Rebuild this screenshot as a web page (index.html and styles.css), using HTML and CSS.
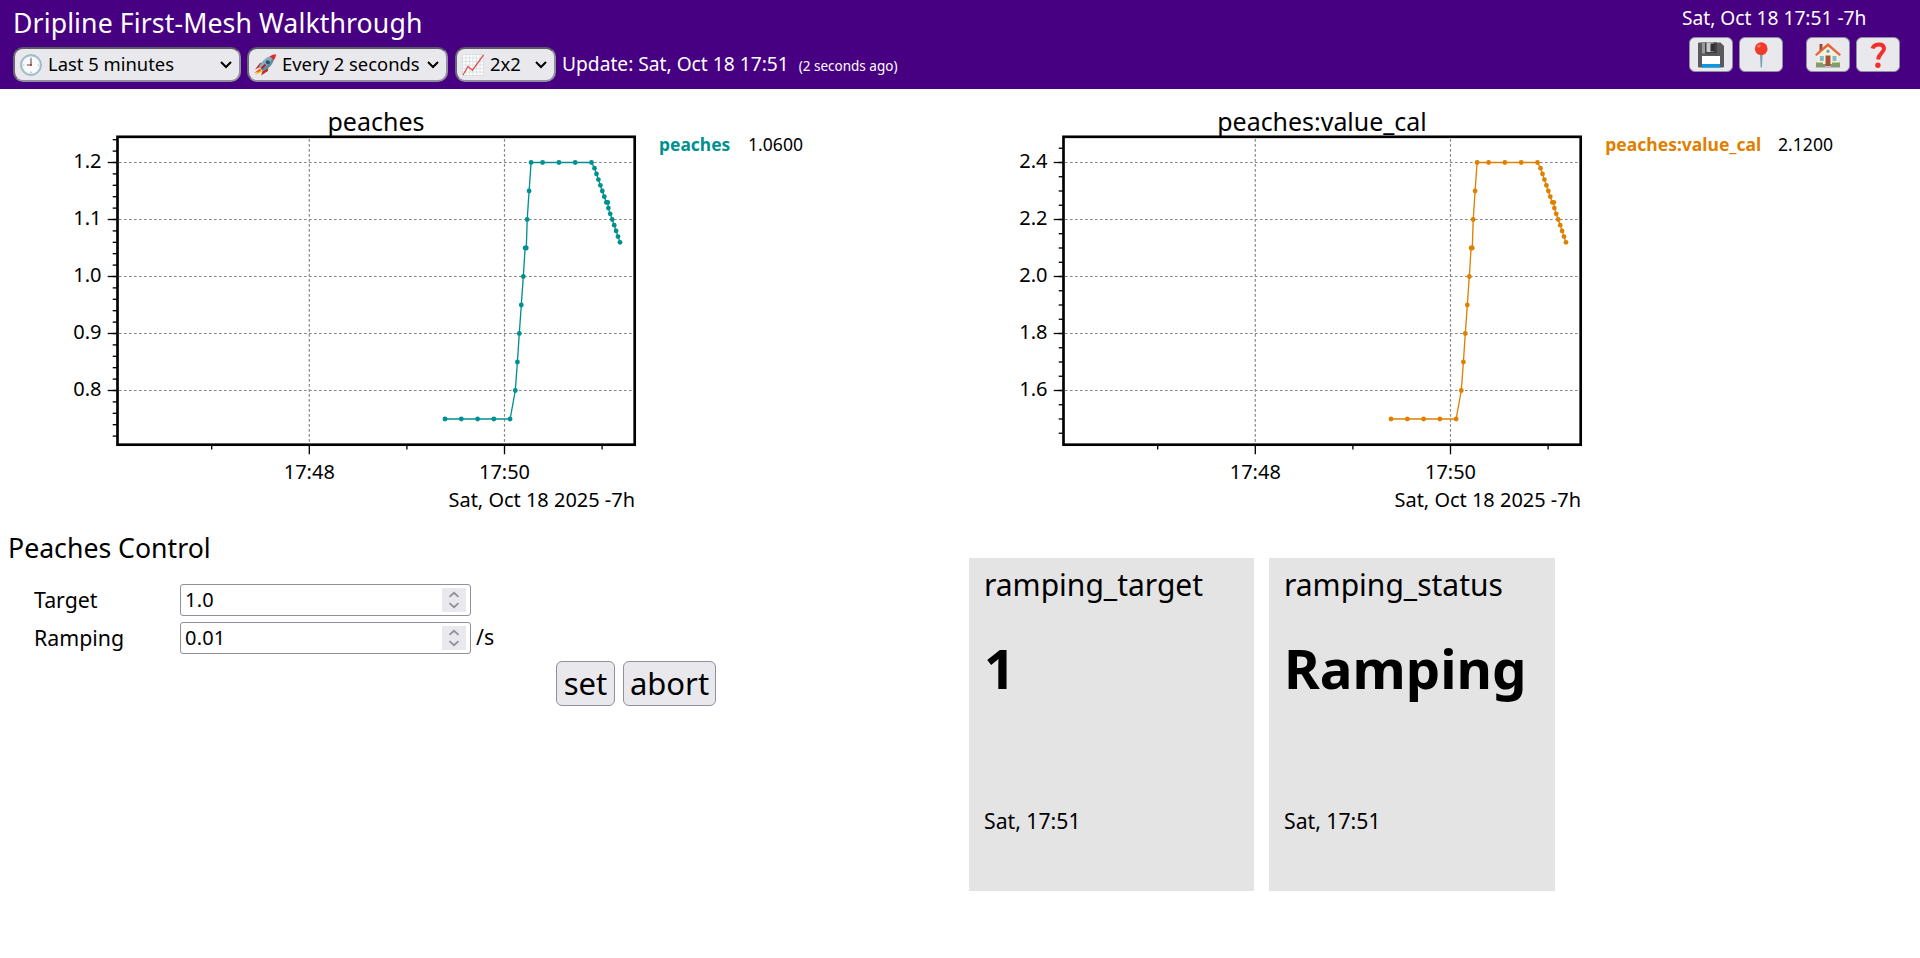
FILE: index.html
```html
<!DOCTYPE html>
<html lang="en">
<head>
<meta charset="utf-8">
<title>Dripline First-Mesh Walkthrough</title>
<link rel="stylesheet" href="styles.css">
</head>
<body>
<header class="topbar">
  <div class="topbar-left">
    <h1 class="title">Dripline First-Mesh Walkthrough</h1>
    <div class="toolbar">
      <div class="select select-range">
        <svg class="emoji" viewBox="0 0 22 22"><circle cx="11" cy="11" r="9.7" fill="#fafafa" stroke="#a5c3cf" stroke-width="1.8"/><circle cx="11" cy="11" r="10.5" fill="none" stroke="#7fa3b2" stroke-width=".5"/><g fill="#889"><circle cx="11" cy="3.8" r=".6"/><circle cx="18.2" cy="11" r=".6"/><circle cx="11" cy="18.2" r=".6"/><circle cx="3.8" cy="11" r=".6"/></g><path d="M11 4.6V11H6.8" fill="none" stroke="#5b4a50" stroke-width="1.1"/><circle cx="11" cy="11" r="1" fill="#a33"/></svg>
        <span class="select-text">Last 5 minutes</span>
        <svg class="chev" viewBox="0 0 12 8"><path d="M1 1l5 5 5-5"/></svg>
      </div>
      <div class="select select-rate">
        <svg class="emoji" viewBox="0 0 22 22"><path d="M6 13l-5 2.5L6 9l4-.6z" fill="#c62828"/><path d="M9 16l-2 5.5 7-4.5.2-4z" fill="#c62828"/><path d="M6.5 14L1 21l7-3.500z" fill="#ffb300"/><path d="M6.200 14.600L0 19l6.500-2z" fill="#f4511e"/><path d="M5 13C7.500 7 12 3 17.500 2l2.500 2.500C19 10 15 14.500 9 17z" fill="#82aec0"/><path d="M7 15c5-2.500 9-6 12-11.500l1 1C19 10 15 14.500 9 17z" fill="#5e8ea3"/><path d="M15.500 2.600C18 1 20 .4 22 .3c0 2-.8 4-2.500 6.200-1-2-2-3-4-3.900z" fill="#dd2c1c"/><circle cx="13.800" cy="8.200" r="2" fill="#2f4e5e"/><path d="M7.500 14.500l4-4" stroke="#b71c1c" stroke-width="1.800"/></svg>
        <span class="select-text">Every 2 seconds</span>
        <svg class="chev" viewBox="0 0 12 8"><path d="M1 1l5 5 5-5"/></svg>
      </div>
      <div class="select select-grid">
        <svg class="emoji" viewBox="0 0 22 22"><path fill="#fdfdfd" d="M.5.500h21v21H.5z"/><path d="M.5.500h21v21H.5zM4 .5v21M7.500.500v21M11 .5v21M14.500.500v21M18 .5v21M.5 4h21M.5 7.500h21M.5 11h21M.5 14.500h21M.5 18h21" fill="none" stroke="#d3dce0" stroke-width=".8"/><path d="M1 21l5-8.500 4.500 3.700L21.500 1" fill="none" stroke="#e5514d" stroke-width="1.300"/></svg>
        <span class="select-text">2x2</span>
        <svg class="chev" viewBox="0 0 12 8"><path d="M1 1l5 5 5-5"/></svg>
      </div>
      <div class="update">Update: Sat, Oct 18 17:51 <span class="ago">(2 seconds ago)</span></div>
    </div>
  </div>
  <div class="topbar-right">
    <div class="clock">Sat, Oct 18 17:51 -7h</div>
    <div class="icon-row">
      <div class="icon-btn"><svg class="icon" viewBox="0 0 26 26"><path d="M0 1.500Q0 .5 1 .5h21.500L26 4v20.500q0 1-1 1H1q-1 0-1-1z" fill="#5a5a5c"/><path d="M4 .5h15v11H4z" fill="#424244"/><path d="M4 .5h3v11H4z" fill="#9a9a9c"/><path d="M8.500.500h7v9.500h-7z" fill="#c9c9cb"/><path d="M12.500 1.500h4v8h-4z" fill="#303032"/><path d="M4 14h18v8.500H4z" fill="#fff"/><path d="M4 22h18v3.500H4z" fill="#0e98e3"/></svg></div>
      <div class="icon-btn"><svg class="icon" viewBox="0 0 26 26"><path d="M12 12h2.600L13.900 25.500h-1.200z" fill="#6f9fb0"/><circle cx="13.200" cy="6.700" r="6.400" fill="#f03a2a"/><ellipse cx="11" cy="4" rx="2" ry="1.300" fill="#ff7b66" transform="rotate(-30 11 4)"/></svg></div>
      <div class="icon-btn icon-btn-home"><svg class="icon" viewBox="0 0 26 26"><path d="M4.500 2h3v8h-3z" fill="#9c4a33"/><path d="M3 12L13 4l10 8v11H3z" fill="#fbf0dc"/><path d="M0 12.500L13 1l13 11.500-1.500 1.500L13 4.500 1.500 14z" fill="#e2663a"/><path d="M1 22h24v3.500H1z" fill="#8a938a"/><path d="M1 20.500h7v3H1zM17 20.500h8v3h-8z" fill="#7fa650"/><path d="M10.500 13.500h5V25h-5z" fill="#a8513a"/><path d="M4.800 14h4v5h-4zM17.500 14h4v5h-4z" fill="#7dbbd0"/><circle cx="13" cy="9.200" r="1.700" fill="#6aa9c2"/><path d="M10 24h6v1.700h-6z" fill="#c2c2bd"/></svg></div>
      <div class="icon-btn"><svg class="icon" viewBox="0 0 26 26"><path d="M7.500 6.500C9 1.800 18 .8 19 6c.7 4-5.500 5.500-5.900 11.500" fill="none" stroke="#f2302b" stroke-width="4"/><circle cx="12.900" cy="23.300" r="2.700" fill="#f2302b"/></svg></div>
    </div>
  </div>
</header>
<main class="board">
  <section class="panel"><svg class="chart chart-teal" id="chart-a" viewBox="0 0 960 440"></svg></section>
  <section class="panel"><svg class="chart chart-orange" id="chart-b" viewBox="0 0 960 440"></svg></section>
  <section class="panel control">
    <h2 class="control-title">Peaches Control</h2>
    <div class="field"><span class="label">Target</span>
      <div class="number"><span>1.0</span><svg class="spin" viewBox="0 0 24 24"><path d="M7.500 8.800l4.500-4 4.500 4M7.500 15.200l4.500 4 4.500-4"/></svg></div></div>
    <div class="field"><span class="label">Ramping</span>
      <div class="number"><span>0.01</span><svg class="spin" viewBox="0 0 24 24"><path d="M7.500 8.800l4.500-4 4.500 4M7.500 15.200l4.500 4 4.500-4"/></svg></div><span class="unit">/s</span></div>
    <div class="actions"><button class="action action-set">set</button><button class="action action-abort">abort</button></div>
  </section>
  <section class="panel cards">
    <article class="card"><div class="card-name">ramping_target</div><div class="card-value">1</div><div class="card-time">Sat, 17:51</div></article>
    <article class="card"><div class="card-name">ramping_status</div><div class="card-value">Ramping</div><div class="card-time">Sat, 17:51</div></article>
  </section>
</main>
<script src="charts.js"></script>
</body>
</html>
```

FILE: styles.css
```css
* { box-sizing: border-box; }
body { margin: 0; background: #fff; color: #000; font-family: "Noto Sans", sans-serif; font-size: 21.33px; overflow: hidden; }
.topbar { height: 89px; background: #480082; color: #fff; display: flex; justify-content: space-between; }
.topbar-left { padding: 8px 0 0 13px; }
.title { margin: 0 0 10px; font-size: 26.67px; font-weight: 400; line-height: 29px; letter-spacing: .1px; }
.toolbar { display: flex; height: 35px; white-space: nowrap; }
.select { height: 35px; border: 2px solid #8f8f9d; border-top-color: #5b5b66; border-left-color: #6a6a76; border-radius: 10px; background: #e9e9ed; color: #000; display: flex; align-items: center; padding: 0 7px 0 5px; font-size: 18.4px; }
.select-range { width: 228px; margin-right: 6px; }
.select-rate { width: 201px; margin-right: 7px; }
.select-grid { width: 101px; margin-right: 6px; }
.emoji { width: 22px; height: 22px; margin-right: 6px; flex: none; }
.select-text { flex: 1; line-height: 29px; padding-bottom: 2px; }
.chev { width: 12px; height: 8px; flex: none; }
.chev path { fill: none; stroke: #000; stroke-width: 2; }
.update { font-size: 19.2px; line-height: 33px; }
.ago { font-size: 13.5px; margin-left: 5px; }
.topbar-right { width: 260px; padding-top: 5px; }
.clock { font-size: 19.2px; line-height: 25px; padding-left: 22px; margin-bottom: 7px; }
.icon-row { display: flex; gap: 6px; padding-left: 29px; }
.icon-btn { width: 44px; height: 35px; border: 1px solid #8f8f9d; border-radius: 6px; background: #e9e9ed; display: flex; align-items: center; justify-content: center; }
.icon-btn-home { margin-left: 17px; }
.icon { width: 26px; height: 26px; }
.board { display: grid; grid-template-columns: 946px 974px; grid-template-rows: 440px 429px; }
.panel { min-width: 0; }
.chart { display: block; width: 960px; height: 440px; overflow: visible; }
.chart-teal { --series: #009090; }
.chart-orange { --series: #de8000; }
.frame { fill: none; stroke: #000; stroke-width: 2.67; }
.tick { stroke: #000; stroke-width: 1.33; }
.grid { stroke: #888; stroke-width: 1.2; stroke-dasharray: 2.67 2.33; }
.line { fill: none; stroke: var(--series); stroke-width: 1.33; }
.dot, .legend { fill: var(--series); }
.legend { font-weight: 700; font-size: 17.7px; }
.legend-value { font-size: 17.7px; }
.axis { font-size: 20px; }
.heading { font-size: 25.3px; }
.control { padding: 4px 0 0 8px; }
.control-title { margin: 0 0 22px; font-size: 26.67px; font-weight: 400; line-height: 29px; }
.field { display: flex; height: 32px; margin-bottom: 6px; padding-left: 26px; line-height: 32px; }
.label { width: 146px; }
.number { width: 291px; height: 32px; border: 1px solid #8f8f9d; border-radius: 3px; padding: 0 4px; display: flex; align-items: center; justify-content: space-between; font-size: 20px; line-height: 29px; letter-spacing: .2px; }
.number span { padding-bottom: 2px; }
.spin { width: 24px; height: 24px; background: #e9e9ed; }
.spin path { fill: none; stroke: #8f8f9d; stroke-width: 1.8; }
.unit { margin-left: 5px; line-height: 30px; }
.actions { display: flex; gap: 8px; padding: 1px 0 0 548px; }
.action { height: 45px; border: 1px solid #8f8f9d; border-radius: 6px; background: #e9e9ed; color: #000; padding: 0; font: 31px/43px "Noto Sans", sans-serif; }
.action-set { width: 59px; }
.action-abort { width: 93px; }
.cards { display: flex; gap: 15px; padding: 29px 0 0 23px; }
.card { width: 285px; height: 333px; background: #e4e4e4; padding: 7px 15px; }
.card + .card { width: 286px; }
.card-name { font-size: 30px; line-height: 40px; }
.card-value { font-size: 54.6px; font-weight: 700; line-height: 64px; margin-top: 31px; }
.card-time { font-size: 21.2px; line-height: 30px; margin-top: 106px; }
```

FILE: charts.js
```js
// Each chart shares one time base; only labels, minor tick spacing and colour differ.
const points = [
  [445, 419], [461.3, 419], [477.6, 419], [493.9, 419], [510.1, 419],
  [515.3, 390.5], [517.4, 362], [519.3, 333.5], [521.3, 305], [523.3, 276.5],
  [525.1, 248], [526.3, 248], [527.2, 219.5], [529.1, 191], [531.1, 162.5],
  [542.6, 162.5], [558.9, 162.5], [575.2, 162.5], [591.5, 162.5],
  [594.5, 168.2], [596.5, 173.9], [598.4, 179.6], [600.4, 185.3], [602.3, 191],
  [604.3, 196.7], [606.3, 202.4], [607.8, 202.4], [608.4, 208.1], [610.2, 213.8],
  [612.2, 219.5], [614.2, 225.2], [616.1, 230.9], [618, 236.6], [620, 242.3]
];

function draw(id, name, nameWidth, nameX, value, valueX, labels, minorStart, minorStep) {
  const out = [];
  const tick = (x1, y1, x2, y2) => out.push(`<line class="tick" x1="${x1}" y1="${y1}" x2="${x2}" y2="${y2}"/>`);
  const text = (cls, x, y, w, s, anchor) => out.push(`<text class="${cls}" x="${x}" y="${y}" textLength="${w}" lengthAdjust="spacingAndGlyphs" text-anchor="${anchor || 'start'}">${s}</text>`);
  labels.forEach((label, i) => {
    const y = 162.5 + 57 * i;
    out.push(`<line class="grid" x1="119" y1="${y}" x2="632" y2="${y}"/>`);
    tick(107.7, y, 117, y);
    text('axis', 101.5, y + 5.5, 28.3, label, 'end');
  });
  for (let y = minorStart; y < 440; y += minorStep) tick(112.7, y, 117, y);
  [['17:48', 309.3], ['17:50', 504.5]].forEach(([label, x]) => {
    out.push(`<line class="grid" x1="${x}" y1="139" x2="${x}" y2="444"/>`);
    tick(x, 445, x, 454.3);
    text('axis', x, 478.5, 51, label, 'middle');
  });
  [211.7, 406.9, 602.1].forEach(x => tick(x, 445, x, 449.6));
  out.push('<rect class="frame" x="117.5" y="136.8" width="517.2" height="307.9"/>');
  out.push(`<polyline class="line" points="${points.join(' ')}"/>`);
  points.forEach(([x, y]) => out.push(`<circle class="dot" cx="${x}" cy="${y}" r="2.4"/>`));
  text('heading', 376, 130.5, nameWidth[0], name, 'middle');
  text('legend', nameX, 150.8, nameWidth[1], name);
  text('legend-value', valueX, 150.8, 55, value);
  text('axis', 635, 506.5, 186.5, 'Sat, Oct 18 2025 -7h', 'end');
  document.getElementById(id).innerHTML = `<g transform="translate(0 -89)">${out.join('')}</g>`;
}

draw('chart-a', 'peaches', [97, 71.3], 659, '1.0600', 748, ['1.2', '1.1', '1.0', '0.9', '0.8'], 139.7, 11.4);
draw('chart-b', 'peaches:value_cal', [209.5, 156], 659.3, '2.1200', 832, ['2.4', '2.2', '2.0', '1.8', '1.6'], 148.25, 14.25);
```
